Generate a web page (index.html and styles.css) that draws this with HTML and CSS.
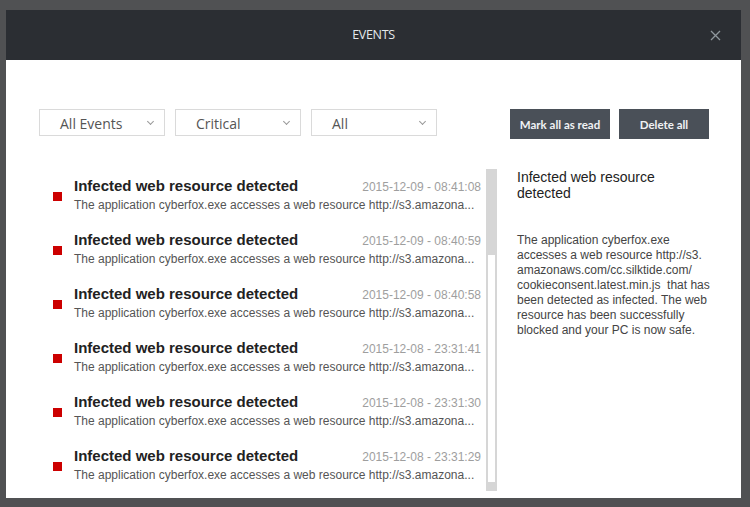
FILE: index.html
```html
<!DOCTYPE html>
<html lang="en">
<head>
    <meta charset="UTF-8">
    <meta name="viewport" content="width=device-width, initial-scale=1.0">
    <title>Events</title>
    <link rel="stylesheet" href="styles.css">
</head>
<body>
    <div class="window">
        <div class="window-header">
            <span class="window-title">EVENTS</span>
            <span class="close-btn">
                <svg width="11" height="11" viewBox="0 0 11 11"><path d="M1 1L10 10M10 1L1 10" stroke="#8f979d" stroke-width="1.3" fill="none"/></svg>
            </span>
        </div>

        <div class="toolbar">
            <div class="filters">
                <div class="select">All Events <span class="chevron"></span></div>
                <div class="select">Critical <span class="chevron"></span></div>
                <div class="select">All <span class="chevron"></span></div>
            </div>
            <div class="actions">
                <button class="btn btn-wide">Mark all as read</button>
                <button class="btn">Delete all</button>
            </div>
        </div>

        <div class="content">
            <div class="event-list">
                <div class="rows">
                    <div class="event">
                        <span class="marker"></span>
                        <div class="event-body">
                            <div class="event-top">
                                <span class="event-title">Infected web resource detected</span>
                                <span class="event-date">2015-12-09 - 08:41:08</span>
                            </div>
                            <div class="event-desc">The application cyberfox.exe accesses a web resource http://s3.amazona...</div>
                        </div>
                    </div>
                    <div class="event">
                        <span class="marker"></span>
                        <div class="event-body">
                            <div class="event-top">
                                <span class="event-title">Infected web resource detected</span>
                                <span class="event-date">2015-12-09 - 08:40:59</span>
                            </div>
                            <div class="event-desc">The application cyberfox.exe accesses a web resource http://s3.amazona...</div>
                        </div>
                    </div>
                    <div class="event">
                        <span class="marker"></span>
                        <div class="event-body">
                            <div class="event-top">
                                <span class="event-title">Infected web resource detected</span>
                                <span class="event-date">2015-12-09 - 08:40:58</span>
                            </div>
                            <div class="event-desc">The application cyberfox.exe accesses a web resource http://s3.amazona...</div>
                        </div>
                    </div>
                    <div class="event">
                        <span class="marker"></span>
                        <div class="event-body">
                            <div class="event-top">
                                <span class="event-title">Infected web resource detected</span>
                                <span class="event-date">2015-12-08 - 23:31:41</span>
                            </div>
                            <div class="event-desc">The application cyberfox.exe accesses a web resource http://s3.amazona...</div>
                        </div>
                    </div>
                    <div class="event">
                        <span class="marker"></span>
                        <div class="event-body">
                            <div class="event-top">
                                <span class="event-title">Infected web resource detected</span>
                                <span class="event-date">2015-12-08 - 23:31:30</span>
                            </div>
                            <div class="event-desc">The application cyberfox.exe accesses a web resource http://s3.amazona...</div>
                        </div>
                    </div>
                    <div class="event">
                        <span class="marker"></span>
                        <div class="event-body">
                            <div class="event-top">
                                <span class="event-title">Infected web resource detected</span>
                                <span class="event-date">2015-12-08 - 23:31:29</span>
                            </div>
                            <div class="event-desc">The application cyberfox.exe accesses a web resource http://s3.amazona...</div>
                        </div>
                    </div>
                </div>
                <div class="scrollbar">
                    <div class="thumb"></div>
                </div>
            </div>

            <div class="details">
                <div class="details-title">Infected web resource detected</div>
                <p class="details-text">The application cyberfox.exe accesses a web resource http://s3.<wbr>amazonaws.com/cc.silktide.com/<wbr>cookieconsent.latest.min.js&nbsp; that has been detected as infected. The web resource has been successfully blocked and your PC is now safe.</p>
            </div>
        </div>
    </div>
</body>
</html>
```

FILE: styles.css
```css
body {
    margin: 0;
    background: #505153;
    font-family: "Liberation Sans", Arial, sans-serif;
}

.window {
    width: 735px;
    height: 488px;
    margin: 10px 0 0 6px;
    background: #fff;
    overflow: hidden;
}

.window-header {
    height: 50px;
    background: #2b2e33;
    display: flex;
    align-items: center;
    justify-content: center;
    position: relative;
}

.window-title {
    font-family: "Open Sans", "Noto Sans", sans-serif;
    font-size: 12.5px;
    color: #e3e9ec;
    letter-spacing: -0.3px;
    margin-top: -1px;
}

.close-btn {
    position: absolute;
    right: 20px;
    top: 20px;
    width: 11px;
    height: 11px;
    display: flex;
}

.toolbar {
    display: flex;
    justify-content: space-between;
    padding: 49px 32px 0 33px;
    height: 30px;
}

.filters {
    display: flex;
    gap: 10px;
}

.select {
    width: 104px;
    height: 25px;
    border: 1px solid #dadada;
    font-family: "Open Sans", "Noto Sans", sans-serif;
    font-size: 14px;
    color: #555;
    line-height: 27px;
    padding-left: 20px;
    position: relative;
}

.chevron {
    position: absolute;
    right: 11px;
    top: 9px;
    width: 4px;
    height: 4px;
    border-right: 1.2px solid #999;
    border-bottom: 1.2px solid #999;
    transform: rotate(45deg);
}

.actions {
    display: flex;
    gap: 9px;
}

.btn {
    height: 30px;
    width: 90px;
    border: none;
    background: #4a5058;
    color: #f0f2f4;
    font-family: Lato, "Open Sans", sans-serif;
    font-weight: bold;
    font-size: 11.5px;
    padding: 0;
}

.btn-wide {
    width: 100px;
}

.content {
    display: flex;
    padding: 30px 0 0 33px;
}

.event-list {
    display: flex;
    gap: 5px;
    height: 322px;
    width: 458px;
    overflow: hidden;
}

.rows {
    width: 442px;
}

.event {
    display: flex;
    height: 54px;
    padding-top: 8px;
    box-sizing: border-box;
}

.marker {
    width: 9px;
    height: 9px;
    background: #cc0000;
    margin: 15px 0 0 14px;
    flex: none;
}

.event-body {
    margin-left: 12px;
    flex: 1;
}

.event-top {
    display: flex;
    justify-content: space-between;
    align-items: baseline;
    height: 18px;
}

.event-title {
    font-size: 15px;
    font-weight: bold;
    color: #222;
    line-height: 18px;
}

.event-date {
    font-size: 12px;
    color: #9e9e9e;
}

.event-desc {
    font-size: 12px;
    color: #555;
    line-height: 21px;
    white-space: nowrap;
}

.scrollbar {
    width: 11px;
    background: #d6d6d6;
    padding: 86px 2px 9px 2px;
    box-sizing: border-box;
    display: flex;
}

.thumb {
    flex: 1;
    background: #fff;
}

.details {
    margin-left: 20px;
}

.details-title {
    width: 190px;
    font-size: 14px;
    line-height: 16px;
    color: #222;
}

.details-text {
    width: 196px;
    margin: 32px 0 0;
    font-size: 12px;
    line-height: 15px;
    color: #444;
}
```
